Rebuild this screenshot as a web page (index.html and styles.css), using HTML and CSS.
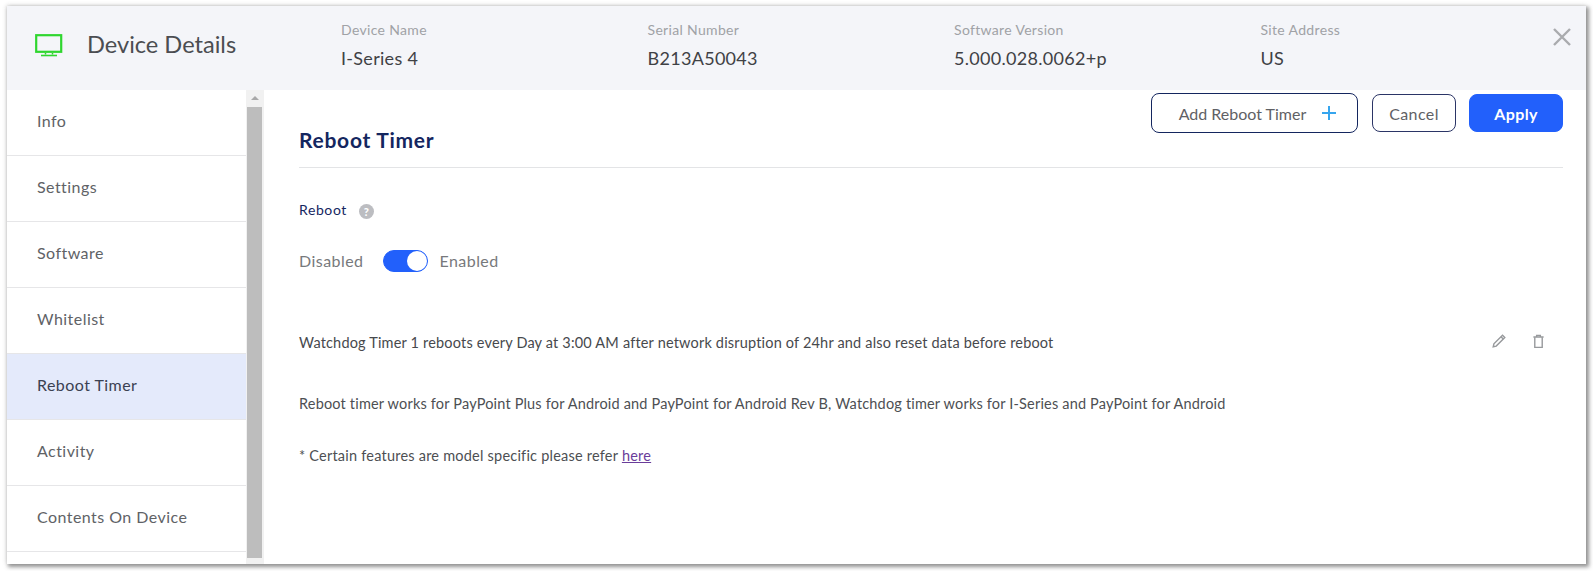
FILE: index.html
```html
<!DOCTYPE html>
<html>
<head>
  <meta charset="utf-8">
  <title>Device Details</title>
  <link rel="stylesheet" href="styles.css">
</head>
<body>
  <div class="modal">
    <div class="modal-header">
      <div class="header-title">
        <svg class="device-icon" width="28" height="23" viewBox="0 0 28 23" fill="none" stroke="#2fd62f">
          <rect x="1.2" y="1.2" width="25" height="16.6" stroke-width="2.2"/>
          <path d="M10.5 19v1.4M17.5 19v1.4" stroke-width="1.5"/>
          <path d="M6 21.5h16" stroke-width="1.6"/>
        </svg>
        <span class="title-text">Device Details</span>
      </div>
      <div class="header-info">
        <div class="info-col"><span class="info-label">Device Name</span><span class="info-value">I-Series 4</span></div>
        <div class="info-col"><span class="info-label">Serial Number</span><span class="info-value">B213A50043</span></div>
        <div class="info-col"><span class="info-label">Software Version</span><span class="info-value">5.000.028.0062+p</span></div>
        <div class="info-col"><span class="info-label">Site Address</span><span class="info-value">US</span></div>
      </div>
      <svg class="close-icon" width="20" height="20" viewBox="0 0 20 20" stroke="#a9abae" stroke-width="2.4">
        <path d="M2 2l16 16M18 2L2 18"/>
      </svg>
    </div>

    <div class="modal-body">
      <div class="sidebar">
        <ul class="nav">
          <li>Info</li>
          <li>Settings</li>
          <li>Software</li>
          <li>Whitelist</li>
          <li class="active">Reboot Timer</li>
          <li>Activity</li>
          <li>Contents On Device</li>
        </ul>
        <div class="scrollbar">
          <div class="scroll-arrow"></div>
          <div class="scroll-thumb"></div>
        </div>
      </div>

      <div class="content">
        <div class="title-row">
          <h2>Reboot Timer</h2>
          <div class="actions">
            <button class="btn btn-add">Add Reboot Timer <span class="plus"></span></button>
            <button class="btn btn-cancel">Cancel</button>
            <button class="btn btn-apply">Apply</button>
          </div>
        </div>

        <div class="reboot-label">
          <span>Reboot</span>
          <span class="help">?</span>
        </div>

        <div class="toggle-row">
          <span>Disabled</span>
          <span class="toggle"><span class="knob"></span></span>
          <span>Enabled</span>
        </div>

        <div class="timer-row">
          <span>Watchdog Timer 1 reboots every Day at 3:00 AM after network disruption of 24hr and also reset data before reboot</span>
          <div class="row-icons">
            <svg width="16" height="16" viewBox="0 0 16 16" fill="none" stroke="#97999c" stroke-width="1.4">
              <path d="M2.2 13.8l.7-3L11.5 2.2l2.3 2.3-8.6 8.6z"/>
              <path d="M10 3.7l2.3 2.3"/>
            </svg>
            <svg width="13" height="15" viewBox="0 0 14 16" fill="none" stroke="#97999c" stroke-width="1.5">
              <path d="M1.5 3.2h11M5 3V1.4h4V3"/>
              <path d="M3 3.5v10.8h8V3.5"/>
            </svg>
          </div>
        </div>

        <p class="note">Reboot timer works for PayPoint Plus for Android and PayPoint for Android Rev B, Watchdog timer works for I-Series and PayPoint for Android</p>
        <p class="note note-last">* Certain features are model specific please refer <a href="#">here</a></p>
      </div>
    </div>
  </div>
</body>
</html>
```

FILE: styles.css
```css
* {
  box-sizing: border-box;
}

html, body {
  height: 100%;
}

body {
  margin: 0;
  padding: 6px 7px 7px 7px;
  background-color: white;
  font-family: Lato, "Open Sans", sans-serif;
  color: #4a4c50;
  overflow: hidden;
}

.modal {
  height: 558px;
  background-color: white;
  box-shadow: 2px 2px 4px 1px rgba(60, 60, 60, 0.55), -1px -1px 4px rgba(120, 120, 120, 0.15);
  display: flex;
  flex-direction: column;
  overflow: hidden;
}

.modal-header {
  height: 84px;
  flex-shrink: 0;
  background-color: #f4f5f9;
  display: flex;
  position: relative;
}

.header-title {
  width: 335px;
  padding-left: 28px;
  display: flex;
  align-items: center;
}

.device-icon {
  margin-right: 24px;
  margin-top: -6px;
}

.title-text {
  font-size: 23.6px;
  color: #4b4d51;
  margin-top: -8px;
}

.header-info {
  display: flex;
  padding-top: 15px;
  margin-left: -1px;
}

.info-col {
  width: 306.5px;
  display: flex;
  flex-direction: column;
}

.info-label {
  font-size: 14px;
  line-height: 17px;
  letter-spacing: 0.33px;
  color: #a0a2a6;
}

.info-value {
  font-size: 18px;
  line-height: 21px;
  margin-top: 10px;
  letter-spacing: 0.3px;
  color: #3f4145;
}

.close-icon {
  position: absolute;
  right: 14px;
  top: 21px;
}

.modal-body {
  flex: 1;
  display: flex;
  min-height: 0;
}

.sidebar {
  width: 257px;
  flex-shrink: 0;
  display: flex;
}

.nav {
  list-style: none;
  margin: 0;
  padding: 0;
  width: 239px;
  flex-shrink: 0;
}

.nav li {
  height: 66px;
  padding-left: 30px;
  padding-bottom: 5px;
  display: flex;
  align-items: center;
  font-size: 16px;
  letter-spacing: 0.45px;
  color: #606266;
  border-bottom: 1px solid #e6e6e8;
}

.nav li.active {
  background-color: #e4eafb;
  color: #3b4152;
}

.scrollbar {
  width: 18px;
  background-color: #f1f1f1;
  padding: 0 2px 0 1px;
}

.scroll-arrow {
  height: 17px;
  position: relative;
}

.scroll-arrow::before {
  content: "";
  position: absolute;
  left: 4px;
  top: 6px;
  border-left: 4px solid transparent;
  border-right: 4px solid transparent;
  border-bottom: 4px solid #a8a8a8;
}

.scroll-thumb {
  height: 451px;
  background-color: #bdbdbd;
}

.content {
  flex: 1;
  padding: 3px 23px 0 35px;
  min-width: 0;
}

.title-row {
  display: flex;
  justify-content: space-between;
  height: 75px;
  border-bottom: 1px solid #e3e4e6;
}

h2 {
  margin: 0;
  align-self: flex-end;
  padding-bottom: 14px;
  font-size: 21px;
  line-height: 26px;
  font-weight: 700;
  letter-spacing: 0.72px;
  color: #14265f;
}

.actions {
  display: flex;
  align-items: flex-start;
}

.btn {
  font-family: Lato, "Open Sans", sans-serif;
  font-size: 16px;
  height: 38px;
  margin-top: 1px;
  border-radius: 8px;
  background-color: white;
  color: #5f6165;
  border: 1px solid #2b3566;
  letter-spacing: 0.4px;
}

.btn-add {
  width: 207px;
  height: 40px;
  margin-top: 0;
  margin-right: 14px;
  padding-left: 12px;
  border-color: #14265f;
  letter-spacing: 0;
  display: flex;
  align-items: center;
  justify-content: center;
}

.plus {
  width: 14px;
  height: 14px;
  margin-left: 16px;
  background:
    linear-gradient(#36a5ee, #36a5ee) center / 14px 2px no-repeat,
    linear-gradient(#36a5ee, #36a5ee) center / 2px 14px no-repeat;
}

.btn-cancel {
  width: 84px;
  margin-right: 13px;
}

.btn-apply {
  width: 94px;
  background-color: #2260fb;
  border-color: #2260fb;
  color: white;
  font-weight: 700;
}

.reboot-label {
  margin-top: 32px;
  display: flex;
  align-items: center;
  font-size: 14px;
  line-height: 20px;
  letter-spacing: 0.6px;
  color: #14265f;
}

.help {
  width: 15px;
  height: 15px;
  margin-left: 12px;
  margin-top: 2px;
  border-radius: 50%;
  background-color: #bcbdc1;
  color: white;
  font-size: 11px;
  line-height: 15px;
  font-weight: 900;
  letter-spacing: 0;
  text-align: center;
}

.toggle-row {
  margin-top: 30px;
  display: flex;
  align-items: center;
  font-size: 16px;
  line-height: 22px;
  letter-spacing: 0.45px;
  color: #77797c;
}

.toggle {
  width: 45px;
  height: 22px;
  margin: 0 11px 0 20px;
  border-radius: 11px;
  background-color: #2260fb;
  border: 1px solid #2260fb;
  display: flex;
  justify-content: flex-end;
}

.knob {
  width: 20px;
  height: 20px;
  border-radius: 50%;
  background-color: white;
}

.timer-row {
  margin-top: 61px;
  display: flex;
  justify-content: space-between;
  align-items: center;
  font-size: 14.5px;
  line-height: 20px;
  letter-spacing: 0.18px;
  color: #47494d;
}

.row-icons {
  display: flex;
  align-items: center;
  gap: 25px;
  padding-right: 18px;
  margin-bottom: 4px;
}

.note {
  margin: 41px 0 0 0;
  font-size: 14.5px;
  line-height: 20px;
  letter-spacing: 0.18px;
  color: #4d4f53;
}

.note-last {
  margin-top: 32px;
  letter-spacing: 0.22px;
}

.note a {
  color: #6a3d9a;
}
```
